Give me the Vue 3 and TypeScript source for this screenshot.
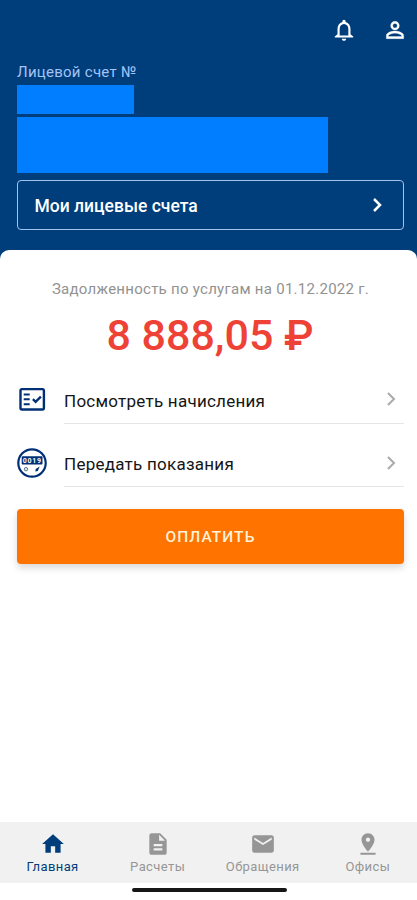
<script setup lang="ts">
interface Tab {
  label: string
  path: string
  active?: boolean
}

const tabs: Tab[] = [
  { label: 'Главная', path: 'M10 20v-6h4v6h5v-8h3L12 3 2 12h3v8z', active: true },
  {
    label: 'Расчеты',
    path: 'M14 2H6c-1.1 0-1.99.9-1.99 2L4 20c0 1.1.89 2 1.99 2H18c1.1 0 2-.9 2-2V8l-6-6zm2 16H8v-2h8v2zm0-4H8v-2h8v2zm-3-5V3.5L18.5 9H13z',
  },
  {
    label: 'Обращения',
    path: 'M20 4H4c-1.1 0-1.99.9-1.99 2L2 18c0 1.1.9 2 2 2h16c1.1 0 2-.9 2-2V6c0-1.1-.9-2-2-2zm0 4l-8 5-8-5V6l8 5 8-5v2z',
  },
  {
    label: 'Офисы',
    path: 'M18 8c0-3.31-2.69-6-6-6S6 4.69 6 8c0 4.5 6 11 6 11s6-6.5 6-11zm-8 0c0-1.1.9-2 2-2s2 .9 2 2-.89 2-2 2c-1.1 0-2-.9-2-2zM5 20v2h14v-2H5z',
  },
]
</script>

<template>
  <div class="screen">
    <header class="header">
      <div class="actions">
        <svg class="action" viewBox="0 0 24 24">
          <path d="M12 22c1.1 0 2-.9 2-2h-4c0 1.1.9 2 2 2zm6-6v-5c0-3.07-1.63-5.64-4.5-6.32V4c0-.83-.67-1.5-1.5-1.5s-1.5.67-1.5 1.5v.68C7.64 5.36 6 7.92 6 11v5l-2.5 2v1h17v-1L18 16zm-2 1H8v-6c0-2.48 1.51-4.5 4-4.5s4 2.02 4 4.5v6z" />
        </svg>
        <svg class="action" viewBox="0 0 24 24">
          <path d="M12 5.9a2.1 2.1 0 1 1 0 4.2 2.1 2.1 0 0 1 0-4.2m0 9c2.97 0 6.1 1.46 6.1 2.1v1.1H5.9V17c0-.64 3.13-2.1 6.1-2.1M12 4C9.79 4 8 5.79 8 8s1.79 4 4 4 4-1.79 4-4-1.79-4-4-4zm0 9c-2.67 0-8 1.34-8 4v3h16v-3c0-2.66-5.33-4-8-4z" stroke="#fff" stroke-width=".3" />
        </svg>
      </div>
      <div class="account-label"><span>Лицевой счет №</span></div>
      <div class="mask mask-number"></div>
      <div class="mask mask-address"></div>
      <button class="accounts" type="button">
        <span>Мои лицевые счета</span>
        <svg viewBox="0 0 10 16"><path d="M2 2l6 6-6 6" /></svg>
      </button>
    </header>

    <main class="card">
      <p class="debt-label"><span>Задолженность по услугам на 01.12.2022 г.</span></p>
      <p class="amount"><span>8 888,05 ₽</span></p>

      <div class="row">
        <svg class="row-icon" viewBox="0 0 30 30">
          <rect x="3.5" y="5.1" width="23.4" height="20.4" rx="1.5" fill="none" stroke="#002f75" stroke-width="2.4" />
          <path d="M6.7 10.4h6M6.7 15.3h6M6.7 20.2h6" fill="none" stroke="#002f75" stroke-width="2" />
          <path d="M15.9 15.1l2.7 2.8 5.3-5.3" fill="none" stroke="#002f75" stroke-width="2.3" />
        </svg>
        <div class="row-body">
          <span>Посмотреть начисления</span>
          <svg class="chevron" viewBox="0 0 10 16"><path d="M2 2l6 6-6 6" /></svg>
        </div>
      </div>
      <div class="row">
        <svg class="row-icon" viewBox="0 0 30 30">
          <circle cx="15" cy="15" r="13.7" fill="#fff" stroke="#002f75" stroke-width="2.2" />
          <rect x="4.7" y="8.2" width="20.8" height="8.4" rx=".8" fill="#002f75" />
          <text x="15.3" y="15" text-anchor="middle" class="meter">0019</text>
          <circle cx="9" cy="21.2" r="1.7" fill="#dcebf0" stroke="#57758f" stroke-width="1" />
          <path d="M18.3 23.600l.4-2.600 4-2.600-1.900 4.600z" fill="#002f75" />
        </svg>
        <div class="row-body">
          <span>Передать показания</span>
          <svg class="chevron" viewBox="0 0 10 16"><path d="M2 2l6 6-6 6" /></svg>
        </div>
      </div>

      <button class="pay" type="button"><span>ОПЛАТИТЬ</span></button>
    </main>

    <nav class="tabs">
      <div v-for="tab in tabs" :key="tab.label" class="tab" :class="{ active: tab.active }">
        <svg viewBox="0 0 24 24"><path :d="tab.path" fill-rule="evenodd" /></svg>
        <span>{{ tab.label }}</span>
      </div>
    </nav>
    <div class="system-bar"><div class="handle"></div></div>
  </div>
</template>

<style>
body {
  background: #fff;
}
</style>

<style scoped>
.screen {
  display: flex;
  flex-direction: column;
  width: 417px;
  height: 900px;
  overflow: hidden;
  background: #003d7b;
  font-family: Roboto, 'Liberation Sans', sans-serif;
}
.screen * {
  box-sizing: border-box;
}
.header {
  height: 249.5px;
  flex: none;
  padding: 17px 13px 0 17px;
}
.actions {
  display: flex;
  justify-content: flex-end;
  gap: 25px;
  height: 26px;
  margin-right: -4px;
}
.action {
  width: 26px;
  height: 26px;
  fill: #fff;
}
.account-label {
  height: 20px;
  margin: 19px 0 3px;
  color: #a3c4f7;
  font-size: 15px;
  line-height: 20px;
  letter-spacing: 0.27px;
}
.mask {
  background: #007eff;
}
.mask-number {
  width: 117px;
  height: 29px;
}
.mask-address {
  width: 311px;
  height: 56px;
  margin-top: 3px;
}
.accounts {
  display: flex;
  align-items: center;
  justify-content: space-between;
  width: 387px;
  height: 49.5px;
  margin-top: 7px;
  padding: 3px 21px 0 16.5px;
  border: 1px solid #9fc3ed;
  border-radius: 4px;
  background: transparent;
  color: #fff;
  font: 500 17.5px/22px Roboto, 'Liberation Sans', sans-serif;
}
.accounts svg {
  width: 10px;
  height: 16px;
  margin-top: -3px;
  overflow: visible;
  fill: none;
  stroke: #fff;
  stroke-width: 2.5;
}
.card {
  flex: 1;
  padding: 29.5px 13px 0 17px;
  border-radius: 9px 9px 0 0;
  background: #fff;
}
.debt-label,
.amount {
  margin: 0;
  text-align: center;
}
.debt-label {
  color: #929292;
  font-size: 15px;
  line-height: 20px;
  letter-spacing: 0.27px;
}
.amount {
  height: 61px;
  padding: 7px 1px 0 0;
  color: #ee4236;
  font-size: 43px;
  font-weight: 500;
  line-height: 58px;
}
.row {
  display: flex;
  height: 63.5px;
}
.row-icon {
  flex: none;
  width: 30px;
  height: 30px;
  margin-top: 24px;
}
.row-body {
  display: flex;
  flex: 1;
  align-items: center;
  justify-content: space-between;
  margin-left: 17px;
  padding: 18.5px 8px 0 0;
  border-bottom: 1px solid #e5e5e5;
  color: #151515;
  font-size: 17px;
  line-height: 24px;
  letter-spacing: 0.25px;
}
.chevron {
  width: 10px;
  height: 16px;
  margin-top: -3px;
  fill: none;
  stroke: #aaa;
  stroke-width: 2;
}
.meter {
  fill: #fff;
  font-size: 7px;
  font-weight: 700;
  letter-spacing: 0.7px;
}
.pay {
  display: flex;
  align-items: center;
  justify-content: center;
  width: 387px;
  height: 54.5px;
  margin-top: 22px;
  padding: 2px 0 0;
  border: 0;
  border-radius: 4px;
  background: #ff7300;
  box-shadow: 0 4px 7px rgba(0, 0, 0, 0.15);
  color: #fff2d8;
  font: 500 15.5px/20px Roboto, 'Liberation Sans', sans-serif;
  letter-spacing: 1.05px;
}
.tabs {
  display: grid;
  grid-template-columns: repeat(4, 105.1px);
  flex: none;
  height: 61px;
  background: #f1f1f1;
}
.tab {
  display: flex;
  flex-direction: column;
  align-items: center;
  padding-top: 9px;
  color: #969696;
  font-size: 13px;
  line-height: 18px;
  letter-spacing: 0.4px;
}
.tab svg {
  width: 26px;
  height: 26px;
  fill: currentColor;
}
.tab span {
  margin-top: 1px;
}
.active {
  color: #003d7b;
}
.system-bar {
  flex: none;
  height: 17px;
  padding-top: 5px;
  background: #fff;
}
.handle {
  width: 155px;
  height: 4px;
  margin-left: 131.5px;
  border-radius: 2px;
  background: #161616;
}
</style>
